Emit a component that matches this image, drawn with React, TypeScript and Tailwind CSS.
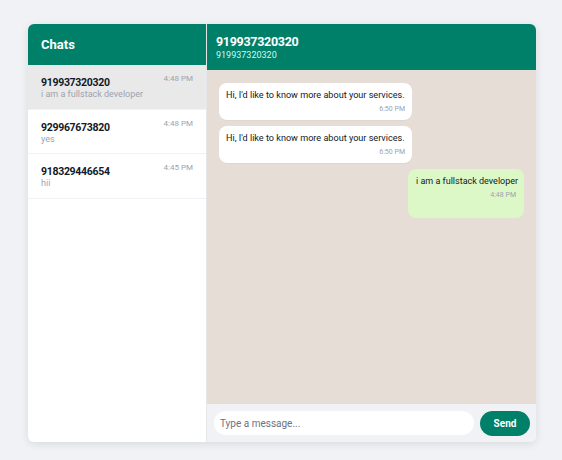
export default function App() {
  const chats = [
    { n: "919937320320", t: "4:48 PM", m: "i am a fullstack developer", a: true },
    { n: "929967673820", t: "4:48 PM", m: "yes", a: false },
    { n: "918329446654", t: "4:45 PM", m: "hii", a: false },
  ];
  return (
    <div className="w-[562px] h-[460px] bg-[#f0f2f5] px-[28px] pt-[24px] pb-[18px] font-['Roboto',sans-serif]">
      <div className="flex h-full w-[508px] bg-white rounded-md overflow-hidden shadow-[0_2px_8px_rgba(0,0,0,0.1)]">
        <div className="w-[179px] shrink-0 border-r border-[#e5e7eb] flex flex-col">
          <div className="h-[41px] bg-[#008069] text-white font-bold text-[13px] leading-[41px] pl-[13px]">Chats</div>
          {chats.map((c) => (
            <div key={c.n} className={`h-[44.5px] flex justify-between pl-[13px] pr-[13px] pt-[11px] border-b border-[#f0f2f5] ${c.a ? "bg-[#e9e9e9]" : ""}`}>
              <div>
                <div className="text-[10.5px] leading-[13px] tracking-[-0.3px] font-bold text-[#111827]">{c.n}</div>
                <div className="text-[9px] leading-[10px] text-[#9ca3af]">{c.m}</div>
              </div>
              <div className="text-[8px] leading-[10px] -mt-[2px] text-[#9ca3af]">{c.t}</div>
            </div>
          ))}
        </div>
        <div className="flex-1 flex flex-col min-w-0">
          <div className="h-[46px] bg-[#008069] pl-[9px] pt-[10px] shrink-0">
            <div className="text-[12.5px] leading-[15px] tracking-[-0.3px] font-bold text-white">919937320320</div>
            <div className="text-[9px] leading-[13px] text-[#ccfbf1]">919937320320</div>
          </div>
          <div className="flex-1 bg-[#e5ddd6] px-[12px] pt-[13px] flex flex-col gap-[6px]">
            {[0, 1].map((i) => (
              <div key={i} className="self-start w-[193px] h-[37px] bg-white rounded-lg px-[7px] pt-[6px] shadow-[0_1px_1px_rgba(0,0,0,0.03)]">
                <div className="text-[9.1px] leading-[13px] text-[#111827] whitespace-nowrap">Hi, I'd like to know more about your services.</div>
                <div className="text-[7px] leading-[14px] text-right text-[#9ca3af]">6:50 PM</div>
              </div>
            ))}
            <div className="self-end w-[116px] h-[49px] bg-[#dcf8c6] rounded-lg px-[8px] pt-[6px]">
              <div className="text-[9px] leading-[13px] text-[#111827] whitespace-nowrap">i am a fullstack developer</div>
              <div className="text-[7px] leading-[14px] text-right text-[#9ca3af]">4:48 PM</div>
            </div>
          </div>
          <div className="h-[38px] shrink-0 bg-[#f0f2f5] flex items-center gap-[6px] pl-[7px] pr-[6px]">
            <input readOnly placeholder="Type a message..." className="flex-1 min-w-0 h-[24px] rounded-full bg-white px-[6px] text-[10px] outline-none placeholder:text-[#6b7280]" />
            <button className="w-[50px] h-[25px] rounded-full bg-[#008069] text-white text-[10px] font-bold">Send</button>
          </div>
        </div>
      </div>
    </div>
  );
}
